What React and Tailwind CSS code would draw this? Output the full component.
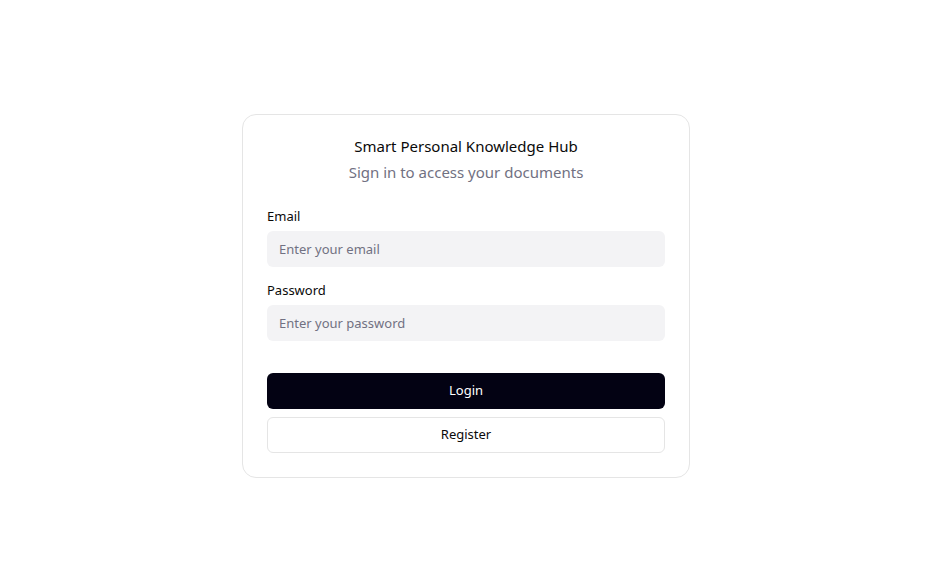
import React from 'react';

const App = () => {
  return (
    <div
      className="flex min-h-screen items-center justify-center bg-white pr-1 pt-[18px]"
      style={{ fontFamily: '"Noto Sans", "Open Sans", sans-serif' }}
    >
      <div className="w-[448px] rounded-[14px] border border-[#e5e5e5] bg-white px-6 pb-6 pt-[19px]">
        <div className="flex flex-col items-center gap-0.5 text-center">
          <h1 className="text-[15px] leading-6 text-[#0a0a0a]">Smart Personal Knowledge Hub</h1>
          <p className="text-[15px] leading-6 text-[#717182]">Sign in to access your documents</p>
        </div>

        <form className="mt-[25px]" onSubmit={(e) => e.preventDefault()}>
          <div className="flex flex-col gap-2">
            <label className="text-[13px] leading-[14px] text-[#0a0a0a]">Email</label>
            <input
              type="email"
              placeholder="Enter your email"
              className="h-9 w-full rounded-md bg-[#f3f3f5] px-3 text-[13px] text-[#0a0a0a] outline-none placeholder:text-[#717182]"
            />
          </div>
          <div className="mt-4 flex flex-col gap-2">
            <label className="text-[13px] leading-[14px] text-[#0a0a0a]">Password</label>
            <input
              type="password"
              placeholder="Enter your password"
              className="h-9 w-full rounded-md bg-[#f3f3f5] px-3 text-[13px] text-[#0a0a0a] outline-none placeholder:text-[#717182]"
            />
          </div>

          <div className="mt-8 flex flex-col gap-2">
            <button type="submit" className="h-9 w-full rounded-md bg-[#030213] text-[13px] text-white">
              Login
            </button>
            <button type="button" className="h-9 w-full rounded-md border border-[#e5e5e5] bg-white text-[13px] text-[#0a0a0a]">
              Register
            </button>
          </div>
        </form>
      </div>
    </div>
  );
};

export default App;
